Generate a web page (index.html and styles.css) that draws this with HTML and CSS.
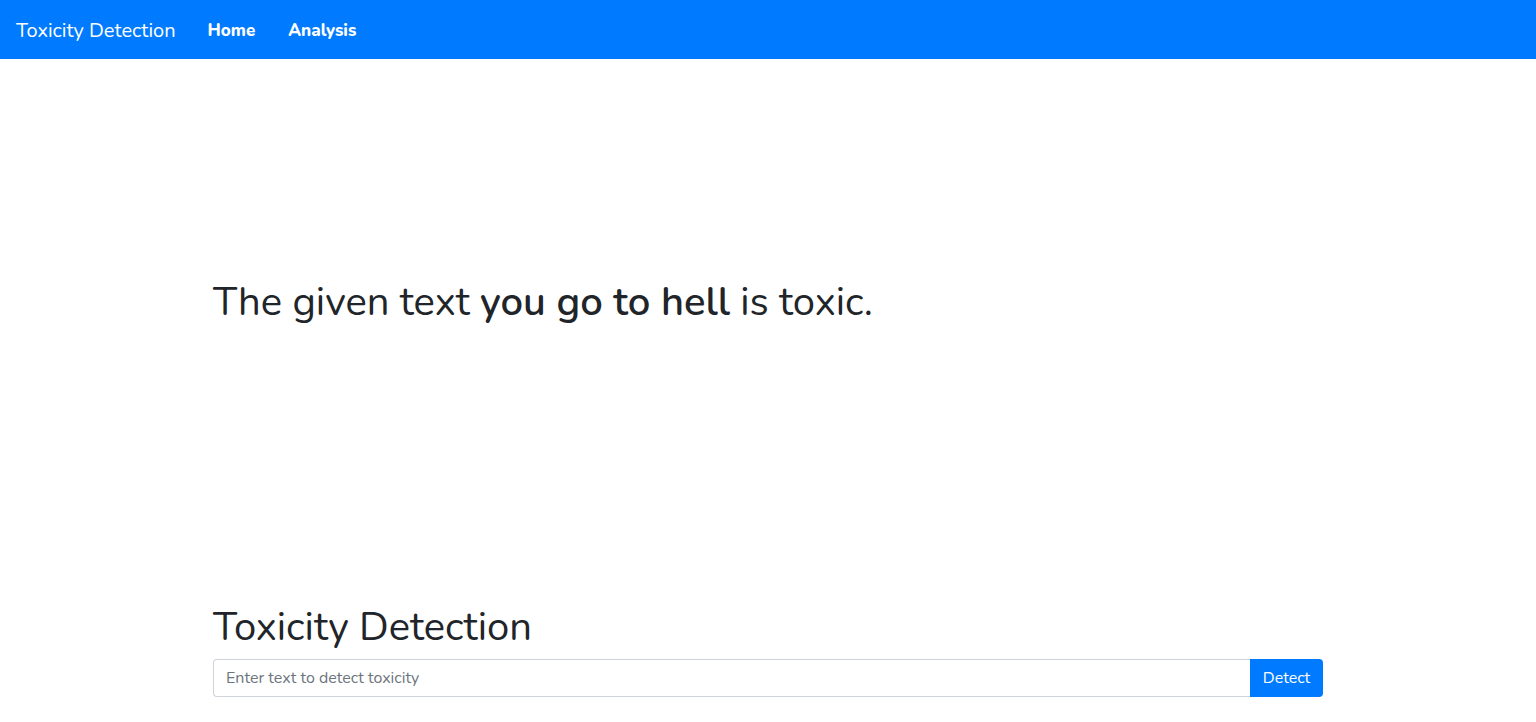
FILE: index.html
```html
<!DOCTYPE html>
<html lang="en">
<head>
<meta charset="utf-8">
<title>Toxicity Detection</title>
<link rel="stylesheet" href="styles.css">
</head>
<body>
<nav class="navbar">
  <a class="brand" href="#">Toxicity Detection</a>
  <a class="nav-link" href="#">Home</a>
  <a class="nav-link" href="#">Analysis</a>
</nav>
<main class="container">
  <section class="result">
    <p class="result-text">The given text <b>you go to hell</b> is toxic.</p>
  </section>
  <section class="form-section">
    <h1 class="title">Toxicity Detection</h1>
    <form class="input-group">
      <input class="text-input" type="text" placeholder="Enter text to detect toxicity">
      <button class="btn" type="button">Detect</button>
    </form>
  </section>
</main>
</body>
</html>
```
FILE: styles.css
```css
* { box-sizing: border-box; }
body {
  margin: 0;
  font-family: "Nunito", "Lato", "Open Sans", sans-serif;
  color: #212529;
  background: #fff;
}
.navbar {
  height: 59px;
  background: #007bff;
  display: flex;
  align-items: center;
  padding: 2px 16px 0;
}
.navbar a { color: #fff; text-decoration: none; }
.brand {
  font-size: 20px;
  margin-right: 32px;
}
.nav-link {
  font-size: 17px;
  font-weight: 800;
  margin-right: 33px;
}
.container {
  width: 1110px;
  margin: 0 auto;
}
.result {
  padding-top: 219px;
  height: 544px;
}
.result-text {
  margin: 0;
  font-size: 40px;
  line-height: 48px;
  font-weight: 400;
}
.result-text b { font-weight: 600; }
.title {
  margin: 0 0 8px;
  font-size: 40px;
  line-height: 48px;
  font-weight: 400;
}
.input-group {
  display: flex;
  margin: 0;
}
.text-input {
  flex: 1;
  height: 38px;
  border: 1px solid #ced4da;
  border-right: none;
  border-radius: 4px 0 0 4px;
  padding: 6px 12px;
  font-family: inherit;
  font-size: 16px;
  color: #495057;
}
.text-input::placeholder { color: #6c757d; }
.btn {
  width: 73px;
  height: 38px;
  border: none;
  background: #007bff;
  color: #fff;
  border-radius: 0 4px 4px 0;
  font-family: inherit;
  font-size: 16px;
}
```
